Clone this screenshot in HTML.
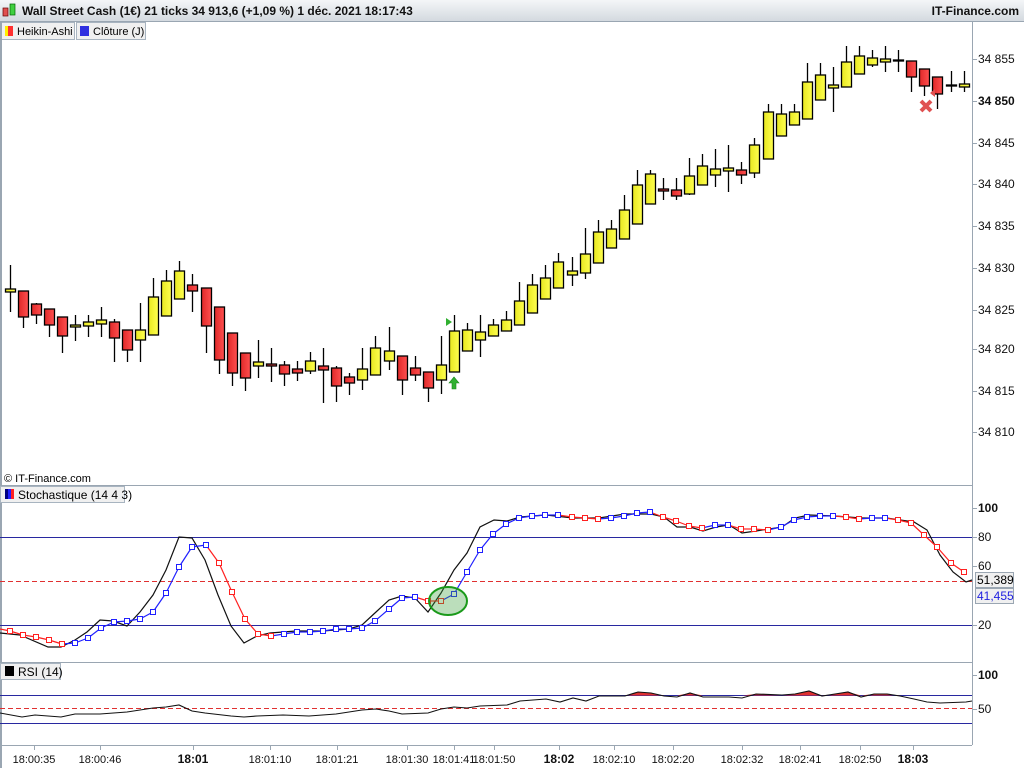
<!DOCTYPE html><html><head><meta charset="utf-8"><style>
body{margin:0;width:1024px;height:768px;overflow:hidden;background:#fff;font-family:"Liberation Sans",sans-serif}
svg{display:block}
text{font-family:"Liberation Sans",sans-serif}
</style></head><body>
<svg id="s" width="1024" height="768" xmlns="http://www.w3.org/2000/svg">
<defs>
<linearGradient id="hg" x1="0" y1="0" x2="0" y2="1"><stop offset="0" stop-color="#f4f6f8"/><stop offset="1" stop-color="#d2d8de"/></linearGradient>
<linearGradient id="yg" x1="0" x2="1"><stop offset="0" stop-color="#e8e820"/><stop offset="1" stop-color="#ffff50"/></linearGradient>
<linearGradient id="rg" x1="0" x2="1"><stop offset="0" stop-color="#e02828"/><stop offset="1" stop-color="#ff5050"/></linearGradient>
</defs>
<rect x="0" y="0" width="1024" height="22" fill="url(#hg)"/>
<line x1="0" y1="21.5" x2="1024" y2="21.5" stroke="#9aa6b2"/>
<rect x="3" y="8" width="5" height="8" fill="#e05050" stroke="#600" stroke-width="0.7"/>
<rect x="10" y="4" width="5" height="11" fill="#40d040" stroke="#060" stroke-width="0.7"/>
<text x="22" y="15" font-size="12" font-weight="bold" fill="#111">Wall Street Cash (1€) 21 ticks 34 913,6 (+1,09 %) 1 déc. 2021 18:17:43</text>
<text x="1019" y="15" font-size="12" font-weight="bold" fill="#111" text-anchor="end">IT-Finance.com</text>
<rect x="0.5" y="22.5" width="74" height="17" fill="#f0f0f0" stroke="#a8b4c0"/>
<rect x="5" y="26" width="3" height="10" fill="#ffef00"/><rect x="8" y="26" width="5" height="10" fill="#ff3030"/>
<text x="17" y="35" font-size="11">Heikin-Ashi</text>
<rect x="76.5" y="22.5" width="69" height="17" fill="#f0f0f0" stroke="#a8b4c0"/>
<rect x="80" y="26" width="9" height="10" fill="#3030e0"/>
<text x="93" y="35" font-size="11">Clôture (J)</text>
<rect x="0" y="22" width="2" height="746" fill="#9aa6b2"/>
<line x1="972.5" y1="22" x2="972.5" y2="745" stroke="#9aa6b2"/>
<line x1="0" y1="485.5" x2="972" y2="485.5" stroke="#9aa6b2"/>
<line x1="0" y1="662.5" x2="972" y2="662.5" stroke="#9aa6b2"/>
<line x1="0" y1="745.5" x2="972" y2="745.5" stroke="#9aa6b2"/>
<text x="4" y="482" font-size="11">© IT-Finance.com</text>
<rect x="0.5" y="486.5" width="124" height="16" fill="#f0f0f0" stroke="#a8b4c0"/>
<rect x="5" y="489" width="3" height="10" fill="#000080"/><rect x="8" y="489" width="3" height="10" fill="#2020ff"/><rect x="11" y="489" width="3" height="10" fill="#ff2020"/>
<text x="18" y="499" font-size="12">Stochastique (14 4 3)</text>
<rect x="0.5" y="663.5" width="60" height="16" fill="#f0f0f0" stroke="#a8b4c0"/>
<rect x="5" y="666" width="9" height="10" fill="#000"/>
<text x="18" y="676" font-size="12">RSI (14)</text>
<g stroke="#2828a0" stroke-width="1">
<line x1="0" y1="537.5" x2="972" y2="537.5"/><line x1="0" y1="625.5" x2="972" y2="625.5"/>
<line x1="0" y1="695.5" x2="972" y2="695.5"/><line x1="0" y1="723.5" x2="972" y2="723.5"/>
</g>
<g stroke="#e03030" stroke-dasharray="5,3"><line x1="0" y1="581.5" x2="972" y2="581.5"/><line x1="0" y1="708.5" x2="972" y2="708.5"/></g>
<g id="c"></g>
<g id="st"></g>
<ellipse cx="448" cy="601" rx="19" ry="14" fill="rgba(60,160,60,0.35)" stroke="#1a9a1a" stroke-width="2"/>
<path d="M446,318 L452,322 L446,326Z" fill="#30b030"/>
<path d="M454,377 L459,383 L456,383 L456,389 L452,389 L452,383 L449,383Z" fill="#30b030" stroke="#1a8a1a" stroke-width="0.6"/>
<path d="M921,101 L931,111 M931,101 L921,111" stroke="#e05050" stroke-width="4"/>
<path d="M930,93 L935,89 L935,97Z" fill="#e05050"/>
<g id="ax" font-size="12" fill="#111"></g>
<rect x="975.5" y="572.5" width="38" height="15" fill="#f0f0f0" stroke="#9aa6b2"/>
<text x="977" y="584" font-size="12">51,389</text>
<rect x="975.5" y="588.5" width="38" height="15" fill="#f0f0f0" stroke="#9aa6b2"/>
<text x="977" y="600" font-size="12" fill="#2020e0">41,455</text>
</svg>
<script>
var NS="http://www.w3.org/2000/svg";
function el(p,t,a,txt){var e=document.createElementNS(NS,t);for(var k in a)e.setAttribute(k,a[k]);if(txt)e.textContent=txt;p.appendChild(e);return e;}
var C=[[265,312,289,292,'Y'],[291,328,291,317,'R'],[303,324,304,315,'R'],[309,337,309,325,'R'],[317,353,317,336,'R'],[315,341,325,327,'Y'],[315,337,322,326,'Y'],[307,337,320,324,'Y'],[319,362,322,338,'R'],[330,362,330,350,'R'],[303,362,330,340,'Y'],[278,335,297,335,'Y'],[270,316,281,316,'Y'],[261,299,271,299,'Y'],[274,312,285,291,'R'],[288,353,288,326,'R'],[307,374,307,360,'R'],[333,386,333,373,'R'],[353,391,353,378,'R'],[340,378,362,366,'Y'],[348,382,364,366,'R'],[361,386,365,374,'R'],[361,381,369,373,'R'],[352,374,361,371,'Y'],[348,403,366,370,'R'],[366,402,368,386,'R'],[373,395,377,383,'R'],[348,390,369,380,'Y'],[336,375,348,375,'Y'],[327,370,351,361,'Y'],[356,395,356,380,'R'],[356,381,368,375,'R'],[372,402,372,388,'R'],[336,394,365,380,'Y'],[315,372,331,372,'Y'],[323,351,330,351,'Y'],[315,357,332,340,'Y'],[319,336,325,336,'Y'],[311,331,320,331,'Y'],[282,325,301,325,'Y'],[274,313,285,313,'Y'],[265,299,278,299,'Y'],[253,288,262,288,'Y'],[257,286,271,275,'Y'],[228,279,254,273,'Y'],[220,263,232,263,'Y'],[220,248,229,248,'Y'],[195,239,210,239,'Y'],[170,224,185,224,'Y'],[170,204,174,204,'Y'],[178,200,189,191,'R'],[178,200,190,196,'R'],[158,195,176,194,'Y'],[154,185,166,185,'Y'],[149,187,169,175,'Y'],[145,192,168,171,'Y'],[162,184,170,175,'R'],[138,178,145,173,'Y'],[104,159,112,159,'Y'],[104,136,114,136,'Y'],[104,125,112,125,'Y'],[63,119,82,119,'Y'],[63,100,75,100,'Y'],[67,112,85,88,'Y'],[46,87,62,87,'Y'],[46,74,56,74,'Y'],[50,67,58,65,'Y'],[46,72,59,62,'Y'],[50,72,60,61,'Y'],[61,92,61,77,'R'],[69,96,69,86,'R'],[77,109,77,94,'R'],[71,92,85,86,'K'],[71,92,84,87,'Y']];
var g=document.getElementById('c');
C.forEach(function(d,i){var x=Math.round(9.5+13.07*i)+0.5;
el(g,'line',{x1:x,y1:d[0],x2:x,y2:d[1],stroke:'#000','stroke-width':1.3});
var h=Math.max(d[3]-d[2],1);
el(g,'rect',{x:x-5,y:d[2],width:10,height:h,fill:d[4]=='Y'?'url(#yg)':d[4]=='R'?'url(#rg)':'#000',stroke:'#000','stroke-width':1.3});});
var X=function(i){return Math.round(9.5+13.07*i);};
var D=[631,635,637,640,644,643,638,628,622,621,619,612,593,567,547,545,563,592,619,634,636,634,632,632,631,629,629,628,621,609,598,597,601,601,594,572,550,534,524,518,516,515,515,517,518,519,518,516,513,512,517,521,526,528,525,525,529,529,530,527,520,517,516,516,517,519,518,518,520,523,535,547,563,572];
var s=document.getElementById('st');
var K=[[0,633],[20,635],[48,647],[61,647],[75,640],[87,632],[100,620],[113,621],[127,626],[140,612],[153,595],[166,570],[179,537],[192,538],[205,560],[218,595],[231,626],[244,643],[257,636],[270,633],[296,631],[322,631],[349,629],[362,625],[376,612],[389,600],[402,596],[415,598],[428,612],[441,593],[454,570],[467,553],[480,527],[494,520],[507,521],[520,517],[546,515],[573,518],[599,518],[625,514],[651,514],[664,517],[677,527],[690,527],[703,531],[716,527],[729,525],[742,533],[756,531],[782,527],[795,518],[809,515],[835,516],[861,518],[887,518],[914,522],[927,530],[940,555],[953,572],[966,582],[972,580]];
el(s,'polyline',{points:K.map(function(p){return p.join(',')}).join(' '),fill:'none',stroke:'#111','stroke-width':1.2});
var cols=[];
for(var i=0;i<D.length;i++){var c=i==0?'r':(D[i]>D[i-1]?'r':(D[i]<D[i-1]?'b':cols[i-1]));cols.push(c);}
for(var i=1;i<D.length;i++){el(s,'line',{x1:X(i-1),y1:D[i-1],x2:X(i),y2:D[i],stroke:cols[i]=='r'?'#ff2020':'#2020ff','stroke-width':1.2});}
el(s,'line',{x1:0,y1:629,x2:X(0),y2:631,stroke:'#ff2020','stroke-width':1.2});
for(var i=0;i<D.length;i++){el(s,'rect',{x:X(i)-2.5,y:D[i]-2.5,width:5,height:5,fill:'#fff',stroke:cols[i]=='r'?'#ff2020':'#2020ff','stroke-width':1});}
var R=[[0,713],[22,717],[35,715],[61,717],[75,714],[100,714],[127,712],[153,708],[166,707],[179,705],[192,711],[205,713],[231,716],[244,717],[257,716],[283,715],[309,716],[336,714],[362,710],[376,709],[389,711],[402,714],[428,713],[441,709],[454,707],[467,708],[480,706],[507,705],[520,701],[546,699],[560,702],[573,698],[586,701],[599,696],[625,696],[638,692],[651,693],[664,696],[677,697],[690,693],[703,697],[729,697],[742,698],[756,694],[782,695],[795,694],[809,691],[822,696],[835,694],[848,692],[861,697],[874,694],[887,694],[900,696],[914,699],[927,702],[940,703],[966,702],[972,701]];
var fp='M'+R.map(function(p){return p[0]+','+Math.min(p[1],695.5)}).join(' L')+' L972,695.5 L0,695.5Z';
el(s,'path',{d:fp,fill:'#e03030'});
el(s,'polyline',{points:R.map(function(p){return p.join(',')}).join(' '),fill:'none',stroke:'#111','stroke-width':1.1});
var ax=document.getElementById('ax');
[['34 855',59],['34 850',101,1],['34 845',143],['34 840',184],['34 835',226],['34 830',268],['34 825',310],['34 820',349],['34 815',391],['34 810',432]].forEach(function(a){
el(ax,'line',{x1:972,y1:a[1]+0.5,x2:977,y2:a[1]+0.5,stroke:'#9aa6b2'});
var t=el(ax,'text',{x:978,y:a[1]+4},a[0]);if(a[2])t.setAttribute('font-weight','bold');});
[['100',508,1],['80',537],['60',566],['20',625],['100',675,1],['50',709]].forEach(function(a){
el(ax,'line',{x1:972,y1:a[1]+0.5,x2:977,y2:a[1]+0.5,stroke:'#9aa6b2'});
var t=el(ax,'text',{x:978,y:a[1]+4},a[0]);if(a[2])t.setAttribute('font-weight','bold');});
[['18:00:35',34],['18:00:46',100],['18:01',193,1],['18:01:10',270],['18:01:21',337],['18:01:30',407],['18:01:41',454],['18:01:50',494],['18:02',559,1],['18:02:10',614],['18:02:20',673],['18:02:32',742],['18:02:41',800],['18:02:50',860],['18:03',913,1]].forEach(function(a){
el(ax,'line',{x1:a[1]+0.5,y1:745,x2:a[1]+0.5,y2:750,stroke:'#9aa6b2'});
var t=el(ax,'text',{x:a[1],y:763,'text-anchor':'middle','font-size':a[2]?12:11},a[0]);if(a[2])t.setAttribute('font-weight','bold');});
</script>
</body></html>
